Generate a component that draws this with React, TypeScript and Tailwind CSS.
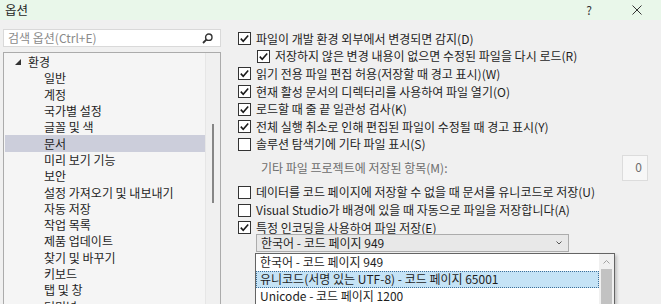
import { ReactNode } from "react";

const treeItems = [
  "일반",
  "계정",
  "국가별 설정",
  "글꼴 및 색",
  "문서",
  "미리 보기 기능",
  "보안",
  "설정 가져오기 및 내보내기",
  "자동 저장",
  "작업 목록",
  "제품 업데이트",
  "찾기 및 바꾸기",
  "키보드",
  "탭 및 창",
  "터미널",
];

const Check = ({ checked }: { checked: boolean }) => (
  <span className="w-[13px] h-[13px] shrink-0 border border-[#333333] bg-white flex items-center justify-center">
    {checked && (
      <svg width="11" height="11" viewBox="0 0 11 11">
        <path d="M1.8 5.6 L4.2 8.2 L9.2 2.4" fill="none" stroke="#1a1a1a" strokeWidth="1.6" />
      </svg>
    )}
  </span>
);

const Row = ({
  checked,
  children,
  indent,
}: {
  checked: boolean;
  children: ReactNode;
  indent?: boolean;
}) => (
  <div className={`h-[17.6px] flex items-center gap-[5px] whitespace-nowrap ${indent ? "ml-[19px]" : ""}`}>
    <Check checked={checked} />
    <span>{children}</span>
  </div>
);

const App = () => {
  return (
    <div className="w-[661px] h-[304px] overflow-hidden bg-[#f0f0f0] text-[#1e1e1e] text-[12px] font-['Noto_Sans_CJK_KR',sans-serif] flex flex-col">
      {/* title bar */}
      <div className="h-[20px] shrink-0 bg-[#e9f7ea] flex items-center pl-[5px]">
        <span className="text-[12.5px]">옵션</span>
        <span className="ml-auto text-[12px] text-[#333]">?</span>
        <svg className="ml-[40px] mr-[19px]" width="10" height="10" viewBox="0 0 10 10">
          <path d="M0.5 0.5 L9.5 9.5 M9.5 0.5 L0.5 9.5" stroke="#333" strokeWidth="1" />
        </svg>
      </div>

      <div className="flex flex-1 min-h-0">
        {/* left: search + tree */}
        <div className="w-[221px] shrink-0 pl-[3px] pt-[9px] flex flex-col">
          <div className="h-[18px] bg-white border border-[#d9d9d9] flex items-center pl-[4px] pr-[7px]">
            <span className="text-[#8a8a8a]">검색 옵션(Ctrl+E)</span>
            <svg className="ml-auto" width="11" height="11" viewBox="0 0 11 11">
              <circle cx="6.8" cy="4.2" r="3.2" fill="none" stroke="#333" strokeWidth="1.4" />
              <path d="M4.6 6.4 L1 10" stroke="#333" strokeWidth="1.8" />
            </svg>
          </div>

          <div className="mt-[5px] h-[270px] border border-[#ababab] bg-[#f5f5f5] flex">
            <div className="flex-1 pt-[1px] pl-[1px]">
              <div className="h-[16.3px] flex items-center whitespace-nowrap">
                <svg className="ml-[10px]" width="6" height="6" viewBox="0 0 6 6">
                  <polygon points="6,0 6,6 0,6" fill="#333" />
                </svg>
                <span className="ml-[7px]">환경</span>
              </div>
              {treeItems.map((item) => (
                <div
                  key={item}
                  className={`h-[16.3px] flex items-center pl-[39px] whitespace-nowrap ${
                    item === "문서" ? "bg-[#cccedb]" : ""
                  }`}
                >
                  {item}
                </div>
              ))}
            </div>
            <div className="w-[15px] shrink-0 border-l border-[#e6e6e6] bg-[#f0f0f0] pt-[71px] flex justify-center">
              <div className="w-[2px] h-[79px] bg-[#868686]" />
            </div>
          </div>
        </div>

        {/* right: options */}
        <div className="flex-1 pl-[17px] pr-[13px] pt-[10px] flex flex-col">
          <Row checked>파일이 개발 환경 외부에서 변경되면 감지(D)</Row>
          <Row checked indent>
            저장하지 않은 변경 내용이 없으면 수정된 파일을 다시 로드(R)
          </Row>
          <Row checked>읽기 전용 파일 편집 허용(저장할 때 경고 표시)(W)</Row>
          <Row checked>현재 활성 문서의 디렉터리를 사용하여 파일 열기(O)</Row>
          <Row checked>로드할 때 줄 끝 일관성 검사(K)</Row>
          <Row checked>전체 실행 취소로 인해 편집된 파일이 수정될 때 경고 표시(Y)</Row>
          <Row checked={false}>솔루션 탐색기에 기타 파일 표시(S)</Row>

          <div className="mt-[2px] h-[26px] flex items-center">
            <span className="ml-[23px] text-[#6d6d6d]">기타 파일 프로젝트에 저장된 항목(M):</span>
            <div className="ml-auto w-[26px] h-[26px] border border-[#dcdcdc] bg-[#f7f7f7] flex justify-end pr-[5px] pt-[2px] text-[#6d6d6d]">
              0
            </div>
          </div>

          <div className="mt-[2.5px]">
            <Row checked={false}>데이터를 코드 페이지에 저장할 수 없을 때 문서를 유니코드로 저장(U)</Row>
            <Row checked={false}>Visual Studio가 배경에 있을 때 자동으로 파일을 저장합니다(A)</Row>
            <Row checked>특정 인코딩을 사용하여 파일 저장(E)</Row>
          </div>

          <div className="relative mt-[-2.5px] ml-[18px] w-[313px] h-[18px] border border-[#acacac] bg-[#e8e8e8] flex items-center pl-[4px] pr-[6px]">
            <span>한국어 - 코드 페이지 949</span>
            <svg className="ml-auto" width="6" height="4" viewBox="0 0 6 4">
              <path d="M0.5 0.5 L3 3 L5.5 0.5" fill="none" stroke="#555" strokeWidth="1" />
            </svg>

            <div className="absolute left-[-2px] top-[18px] w-[360px] h-[60px] bg-white border border-[#646464] shadow-[2px_2px_3px_rgba(0,0,0,0.2)] flex">
              <div className="flex-1">
                <div className="h-[17px] flex items-center pl-[4px] whitespace-nowrap">
                  한국어 - 코드 페이지 949
                </div>
                <div className="h-[17px] flex items-center pl-[3px] whitespace-nowrap bg-[#c5e3f6] border border-dotted border-[#3d6f99]">
                  유니코드(서명 있는 UTF-8) - 코드 페이지 65001
                </div>
                <div className="h-[17px] flex items-center pl-[4px] whitespace-nowrap">
                  Unicode - 코드 페이지 1200
                </div>
              </div>
              <div className="w-[15px] shrink-0 bg-[#f0f0f0] flex flex-col items-center">
                <svg className="mt-[6px]" width="7" height="4" viewBox="0 0 7 4">
                  <path d="M0.5 3.5 L3.5 0.5 L6.5 3.5" fill="none" stroke="#a0a0a0" strokeWidth="1" />
                </svg>
                <div className="mt-[5px] w-[11px] flex-1 bg-[#c2c2c2]" />
              </div>
            </div>
          </div>
        </div>
      </div>
    </div>
  );
};

export default App;
